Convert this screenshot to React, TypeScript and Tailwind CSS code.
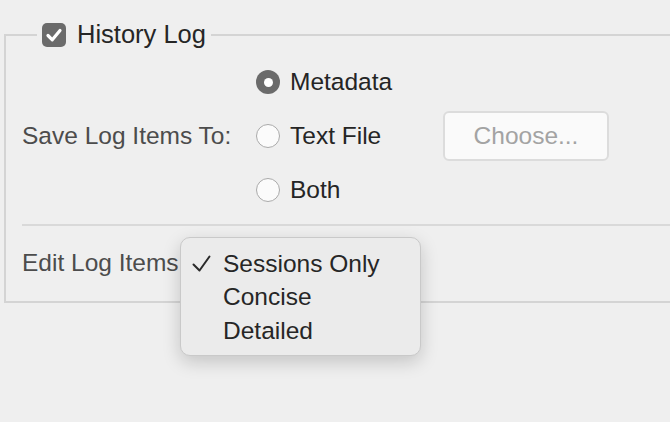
import React from "react"

// ─────────────────────────── Controls ──────────────────────

function Checkbox() {
  return (
    <span className="flex h-[24px] w-[24px] items-center justify-center rounded-[5px] bg-[#6b6b6b]">
      <svg width="24" height="24" viewBox="0 0 24 24">
        <path d="M6 12.5 L10.3 16.8 L18 7.5" fill="none" stroke="#fff" strokeWidth="3.2" strokeLinecap="round" strokeLinejoin="round" />
      </svg>
    </span>
  )
}

function Radio({ checked }: { checked?: boolean }) {
  if (checked) {
    return (
      <span className="flex h-[24px] w-[24px] items-center justify-center rounded-full bg-[#6b6b6b]">
        <span className="h-[9px] w-[9px] rounded-full bg-white" />
      </span>
    )
  }
  return <span className="h-[24px] w-[24px] rounded-full border-[1.5px] border-[#aaaaaa] bg-[#fbfbfb]" />
}

function RadioRow({ label, checked }: { label: string; checked?: boolean }) {
  return (
    <div className="flex h-[54px] items-center gap-[10px]">
      <Radio checked={checked} />
      <span className="text-[#252525]">{label}</span>
    </div>
  )
}

// ─────────────────────────── Popup Menu ─────────────────────

const MENU_ITEMS = ["Sessions Only", "Concise", "Detailed"]

function PopupMenu() {
  return (
    <div className="absolute left-[180px] top-[237px] h-[119px] w-[241px] rounded-[10px] border border-[#c9c9c9] bg-[#ebebeb] pt-[9px] shadow-[0_6px_18px_rgba(0,0,0,0.18)]">
      {MENU_ITEMS.map((item, i) => (
        <div key={item} className="flex h-[33.5px] items-center">
          <span className="flex w-[42px] justify-end pr-[12px]">
            {i === 0 && (
              <svg width="19" height="18" viewBox="0 0 19 18">
                <path d="M1.5 9.5 L7.5 15.5 L17.5 1.5" fill="none" stroke="#2a2a2a" strokeWidth="2" strokeLinecap="round" strokeLinejoin="round" />
              </svg>
            )}
          </span>
          <span className="text-[#262626]">{item}</span>
        </div>
      ))}
    </div>
  )
}

// ─────────────────────────── Page ───────────────────────────

export default function App() {
  return (
    <div
      className="relative h-[422px] w-[670px] overflow-hidden bg-[#efefef] text-[24.5px] leading-none"
      style={{ fontFamily: '"Liberation Sans", Arial, sans-serif' }}
    >
      <fieldset className="ml-[4px] mt-[22px] w-[720px] border-2 border-[#d4d4d4] p-0">
        <legend className="ml-[31px] flex h-[26px] items-center gap-[11px] px-[5px]">
          <Checkbox />
          <span className="text-[25.5px] text-[#262626]">History Log</span>
        </legend>

        <div className="flex pl-[16px] pt-[7px]">
          <div className="flex w-[234px] flex-col">
            <div className="h-[54px]" />
            <div className="flex h-[54px] items-center">
              <span className="text-[#4c4c4c]">Save Log Items To:</span>
            </div>
          </div>
          <div className="flex flex-col">
            <RadioRow label="Metadata" checked />
            <div className="flex items-center">
              <div className="w-[187px]">
                <RadioRow label="Text File" />
              </div>
              <button className="flex h-[50px] w-[166px] items-center justify-center rounded-[6px] border-2 border-[#dcdcdc] bg-[#fafafa] text-[#a3a3a3]">
                Choose...
              </button>
            </div>
            <RadioRow label="Both" />
          </div>
        </div>

        <div className="ml-[16px] mt-[7px] border-t-2 border-[#d9d9d9]" />

        <div className="flex h-[75px] items-center pl-[16px]">
          <span className="text-[#4c4c4c]">Edit Log Items:</span>
        </div>
      </fieldset>

      <PopupMenu />
    </div>
  )
}
